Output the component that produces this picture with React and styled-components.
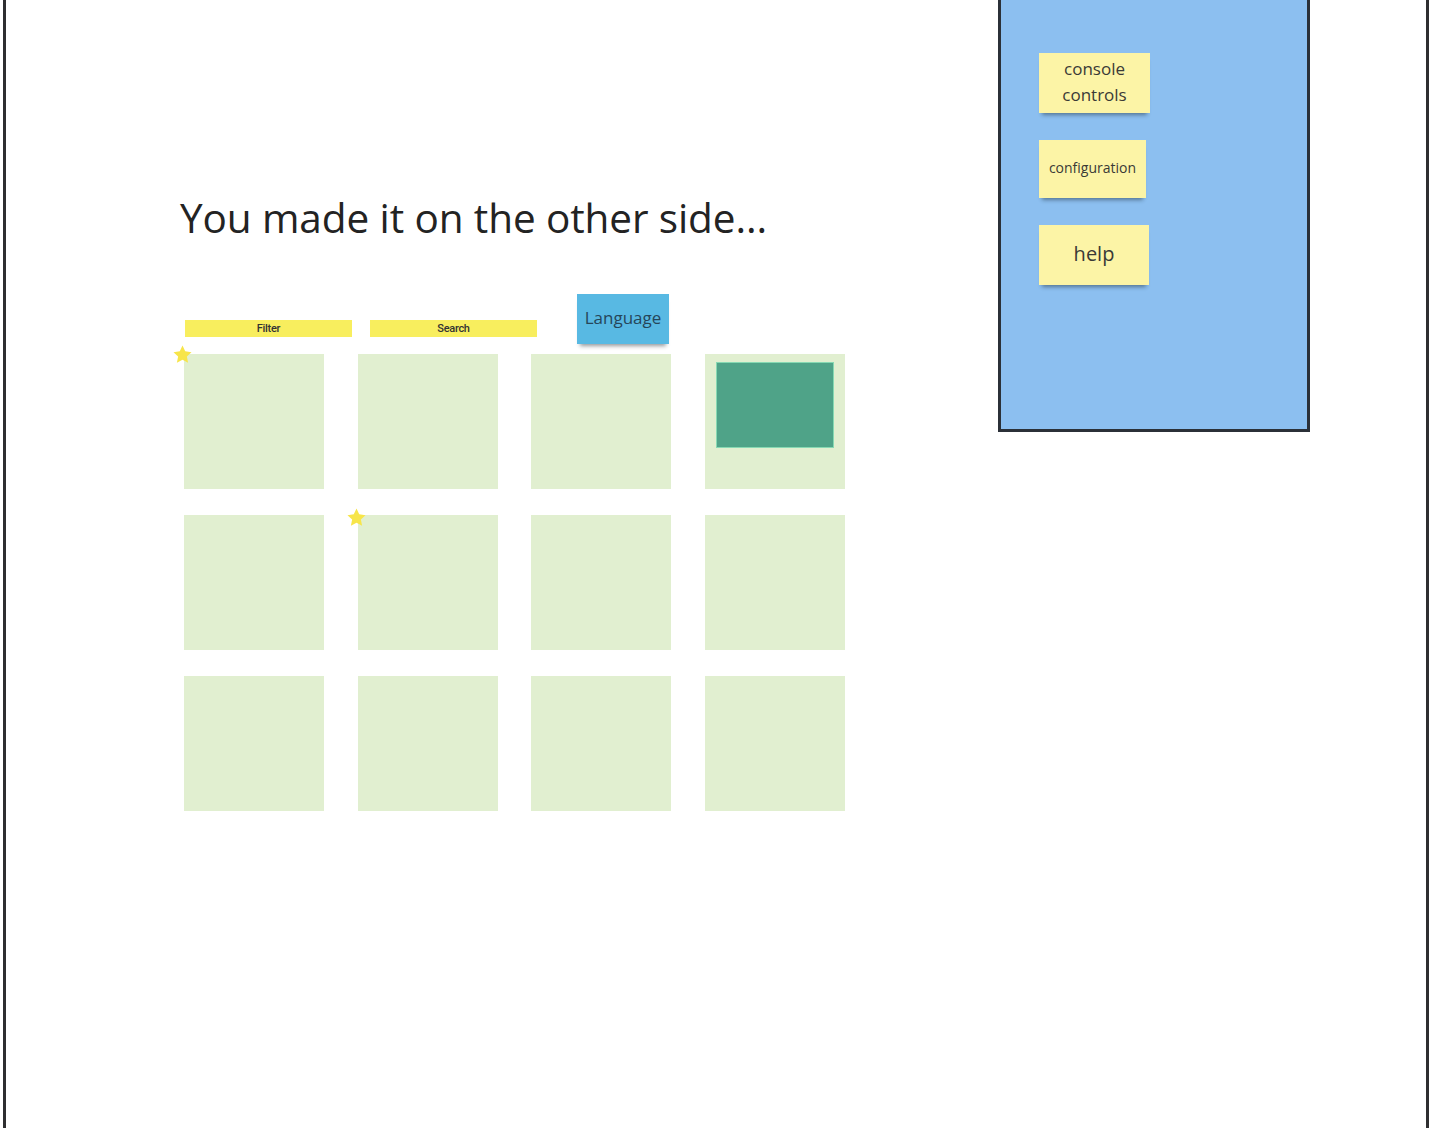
import React from "react";
import styled, { createGlobalStyle } from "styled-components";

const GlobalStyle = createGlobalStyle`
  html, body {
    margin: 0;
    padding: 0;
    background: #ffffff;
  }
  body {
    font-family: "Open Sans", "Liberation Sans", sans-serif;
  }
`;

const colors = {
  frame: "#2f2f31",
  panel: "#8cbff0",
  panelBorder: "#2b3038",
  sticky: "#fcf4a6",
  bar: "#f8ee5e",
  language: "#58b9e3",
  cell: "#e1efd0",
  tile: "#4fa388",
  star: "#f7e54a",
  ink: "#2b2b2b",
};

const Frame = styled.div`
  box-sizing: border-box;
  margin-left: 3px;
  width: 1426px;
  height: 1128px;
  border-left: 3px solid ${colors.frame};
  border-right: 3px solid ${colors.frame};
  display: flex;
  align-items: flex-start;
  overflow: hidden;
`;

const Board = styled.div`
  width: 992px;
  flex: none;
  box-sizing: border-box;
  padding: 198px 0 0 178px;
  display: flex;
  flex-direction: column;
`;

const Heading = styled.h1`
  margin: 0 0 0 -4px;
  font-family: "Open Sans", "Liberation Sans", sans-serif;
  font-weight: 400;
  font-size: 40.5px;
  line-height: 40px;
  color: #232323;
  letter-spacing: -0.1px;
  white-space: nowrap;
`;

const Toolbar = styled.div`
  margin-top: 56px;
  display: flex;
  align-items: flex-end;
  padding-left: 1px;
`;

const Bar = styled.div`
  width: 167px;
  height: 17px;
  margin-right: ${p => p.gap}px;
  margin-bottom: 7px;
  background: ${colors.bar};
  display: flex;
  align-items: center;
  justify-content: center;
  font-family: Roboto, "Liberation Sans Narrow", sans-serif;
  font-size: 11px;
  font-weight: 500;
  letter-spacing: -0.3px;
  color: #333;
`;

const Sticky = styled.div`
  box-sizing: border-box;
  width: ${p => p.w}px;
  height: ${p => p.h}px;
  padding-bottom: 3px;
  background: ${p => p.bg || colors.sticky};
  display: flex;
  align-items: center;
  justify-content: center;
  text-align: center;
  font-family: "Open Sans", "Liberation Sans", sans-serif;
  font-size: ${p => p.size}px;
  line-height: 1.5;
  color: ${p => p.color || "#3a3a36"};
  box-shadow: 0 5px 4px -3px rgba(20, 30, 40, 0.45);
`;

const Grid = styled.div`
  margin-top: 10px;
  display: grid;
  grid-template-columns: repeat(4, 140px);
  grid-auto-rows: 135px;
  column-gap: 33.5px;
  row-gap: 26px;
`;

const Cell = styled.div`
  position: relative;
  background: ${colors.cell};
  padding: 8px 11px 0 11px;
`;

const Tile = styled.div`
  height: 86px;
  background: ${colors.tile};
  border: 1px solid #86d9b3;
  box-sizing: border-box;
`;

const StarBadge = styled.svg`
  position: absolute;
  left: -12px;
  top: -10px;
  width: 21px;
  height: 21px;
`;

const Panel = styled.div`
  width: 312px;
  height: 435px;
  margin-top: -3px;
  flex: none;
  box-sizing: border-box;
  background: ${colors.panel};
  border: 3px solid ${colors.panelBorder};
  padding: 53px 0 0 38px;
  display: flex;
  flex-direction: column;
  align-items: flex-start;
  gap: 27px;
`;

const Star = ({ dy = 0 }) => (
  <StarBadge viewBox="0 0 24 24" style={{ marginTop: dy }}>
    <path
      d="M12 1.8l3.1 6.6 7.2.9-5.3 5 1.4 7.1L12 17.9l-6.4 3.5 1.4-7.1-5.3-5 7.2-.9z"
      fill={colors.star}
    />
  </StarBadge>
);

const cells = [
  { star: true },
  {},
  {},
  { tile: true },
  {},
  { star: true, dy: 2 },
  {},
  {},
  {},
  {},
  {},
  {},
];

export default function App() {
  return (
    <>
      <GlobalStyle />
      <Frame>
        <Board>
          <Heading>You made it on the other side...</Heading>
          <Toolbar>
            <Bar gap={18}>Filter</Bar>
            <Bar gap={40}>Search</Bar>
            <Sticky w={92} h={50} size={17} bg={colors.language} color="#26465a">
              Language
            </Sticky>
          </Toolbar>
          <Grid>
            {cells.map((c, i) => (
              <Cell key={i}>
                {c.tile && <Tile />}
                {c.star && <Star dy={c.dy} />}
              </Cell>
            ))}
          </Grid>
        </Board>
        <Panel>
          <Sticky w={111} h={60} size={17}>
            console
            <br />
            controls
          </Sticky>
          <Sticky w={107} h={58} size={14}>
            configuration
          </Sticky>
          <Sticky w={110} h={60} size={20}>
            help
          </Sticky>
        </Panel>
      </Frame>
    </>
  );
}
